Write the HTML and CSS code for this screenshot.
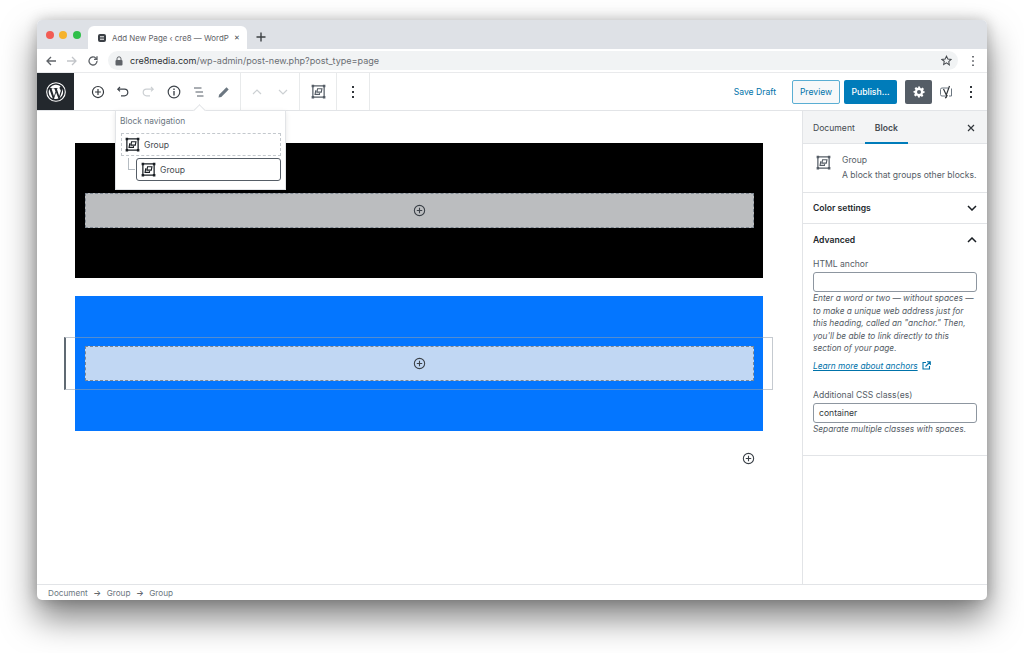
FILE: index.html
```html
<!DOCTYPE html>
<html lang="en">
<head>
    <meta charset="UTF-8">
    <title>Add New Page</title>
    <link rel="stylesheet" href="styles.css">
</head>
<body>
    <svg class="defs" width="0" height="0">
        <symbol id="group" viewBox="0 0 24 24">
            <path fill="none" stroke="currentColor" stroke-width="2" d="M3 3h18v18H3z"/>
            <path fill="currentColor" d="M1 1h4v4H1zM19 1h4v4h-4zM1 19h4v4H1zM19 19h4v4h-4z"/>
            <path fill="none" stroke="currentColor" stroke-width="1.800" d="M10.500 7.500h7l-1 5.500h-7zM8.500 11h-1l-1 5.500h7l.3-2"/>
        </symbol>
        <symbol id="plus-circle" viewBox="0 0 24 24">
            <circle cx="12" cy="12" r="9.500" fill="none" stroke="currentColor" stroke-width="2"/>
            <path fill="none" stroke="currentColor" stroke-width="2" d="M12 7v10M7 12h10"/>
        </symbol>
    </svg>

    <div class="window">
        <div class="tabstrip">
            <div class="lights">
                <span class="light red"></span>
                <span class="light yellow"></span>
                <span class="light green"></span>
            </div>
            <div class="tab">
                <svg class="favicon" width="10" height="10" viewBox="0 0 10 10"><rect x="1" y="1" width="8" height="8" rx="2" fill="#3a3f45"/><path d="M3 3.800h4M3 6.200h4" stroke="#fff" stroke-width="1"/></svg>
                <span class="tab-title">Add New Page ‹ cre8 — WordP</span>
                <span class="tab-close">✕</span>
            </div>
            <svg class="new-tab" width="10" height="10" viewBox="0 0 10 10"><path d="M5 .5v9M.5 5h9" stroke="#3c4043" stroke-width="1.400"/></svg>
        </div>

        <div class="addressbar">
            <svg width="12" height="12" viewBox="0 0 12 12"><path d="M11 6H2M6 2 2 6l4 4" fill="none" stroke="#5f6368" stroke-width="1.300"/></svg>
            <svg width="12" height="12" viewBox="0 0 12 12"><path d="M1 6h9M6 2l4 4-4 4" fill="none" stroke="#c2c5c9" stroke-width="1.300"/></svg>
            <svg width="12" height="12" viewBox="0 0 12 12"><path d="M10 6a4 4 0 1 1-1.200-2.900L10 4.300V1.300M10 4.300H7" fill="none" stroke="#5f6368" stroke-width="1.300"/></svg>
            <div class="omnibox">
                <svg width="8" height="10" viewBox="0 0 8 10"><rect x=".5" y="4" width="7" height="5.500" rx="1" fill="#5f6368"/><path d="M2 4V2.800a2 2 0 0 1 4 0V4" fill="none" stroke="#5f6368"/></svg>
                <span class="url"><span class="url-host">cre8media.com</span>/wp-admin/post-new.php?post_type=page</span>
                <svg class="star" width="11" height="11" viewBox="0 0 24 24"><path d="m12 2.500 3 6.400 7 .9-5.100 4.800 1.300 7L12 17.200l-6.200 3.400 1.300-7L2 9.800l7-.9z" fill="none" stroke="#45494e" stroke-width="2.200"/></svg>
            </div>
            <svg class="chrome-menu" width="4" height="12" viewBox="0 0 4 12"><path d="M2 1v1.500M2 5.200v1.500M2 9.500V11" stroke="#5f6368" stroke-width="1.800"/></svg>
        </div>

        <div class="toolbar">
            <div class="wp-logo">
                <svg width="20" height="20" viewBox="0 0 20 20"><circle cx="10" cy="10" r="9.300" fill="none" stroke="#fff" stroke-width="1.100"/><path fill="#fff" d="M2.700 10a7.300 7.300 0 0 0 4.100 6.600L3.300 7A7.300 7.300 0 0 0 2.700 10zm12.200-.4c0-.9-.3-1.500-.6-2-.4-.6-.7-1.100-.7-1.700 0-.7.5-1.300 1.200-1.300h.1A7.300 7.300 0 0 0 3.900 6h.5c.8 0 1.900-.1 1.900-.1.400 0 .4.600 0 .6 0 0-.4.100-.8.100l2.500 7.600 1.500-4.600-1.100-3c-.4 0-.7-.1-.7-.1-.4 0-.3-.6 0-.6 0 0 1.200.1 1.900.1.800 0 1.900-.1 1.900-.1.400 0 .4.600 0 .6 0 0-.4.100-.8.100l2.500 7.500.7-2.300c.3-1 .5-1.600.5-2.200zM10.100 10.600 8 16.700a7.300 7.300 0 0 0 4.500-.1l-.1-.1zm6.100-4c0 .2.100.5.100.8 0 .7-.1 1.500-.5 2.600l-2.200 6.300a7.300 7.300 0 0 0 2.600-9.700z"/></svg>
            </div>
            <div class="tool-group main-tools">
                <svg class="tool" width="14" height="14"><use href="#plus-circle"/></svg>
                <svg class="tool" width="14" height="14" viewBox="0 0 14 14"><path d="M4 2 1.800 4.200 4 6.400M1.800 4.200h6.700a3.300 3.300 0 0 1 0 6.600H5" fill="none" stroke="#40464d" stroke-width="1.200"/></svg>
                <svg class="tool" width="14" height="14" viewBox="0 0 14 14"><path d="M10 2l2.200 2.200L10 6.400M12.200 4.200H5.500a3.300 3.300 0 0 0 0 6.600H9" fill="none" stroke="#ccd0d3" stroke-width="1.200"/></svg>
                <svg class="tool" width="14" height="14" viewBox="0 0 14 14"><circle cx="7" cy="7" r="5.800" fill="none" stroke="#40464d" stroke-width="1.200"/><path d="M7 6v4.500M7 3.500V5" stroke="#40464d" stroke-width="1.400"/></svg>
                <svg class="tool" width="14" height="14" viewBox="0 0 14 14"><path d="M2 3h7.500M3.500 7H11M5 11h6.500" stroke="#555d66" stroke-width="1"/></svg>
                <svg class="tool" width="14" height="14" viewBox="0 0 14 14"><path d="M1.500 12.500l.6-2.800L9.500 2.300l2.200 2.200-7.400 7.400z" fill="#6c7781"/></svg>
            </div>
            <div class="tool-group mover">
                <svg width="10" height="6" viewBox="0 0 10 6"><path d="M1 5l4-4 4 4" fill="none" stroke="#ccd0d3" stroke-width="1.200"/></svg>
                <svg width="10" height="6" viewBox="0 0 10 6"><path d="M1 1l4 4 4-4" fill="none" stroke="#ccd0d3" stroke-width="1.200"/></svg>
            </div>
            <div class="tool-group switcher">
                <svg class="group-icon" width="15" height="15"><use href="#group"/></svg>
            </div>
            <div class="tool-group more">
                <svg width="4" height="14" viewBox="0 0 4 14"><path d="M2 1v2M2 6v2M2 11v2" stroke="#32373c" stroke-width="2"/></svg>
            </div>
            <div class="publish-tools">
                <span class="save-draft">Save Draft</span>
                <span class="btn btn-preview">Preview</span>
                <span class="btn btn-publish">Publish…</span>
                <span class="btn-settings">
                    <svg width="12" height="12" viewBox="0 0 24 24"><path fill="#fff" fill-rule="evenodd" d="M10 1h4l.6 3.200 1.900.8 2.700-1.800 2.800 2.800-1.800 2.700.8 1.900L23 10v4l-3.200.6-.8 1.900 1.800 2.700-2.800 2.800-2.700-1.800-1.900.8L14 23h-4l-.6-3.200-1.900-.8-2.700 1.800L2 18l1.800-2.700-.8-1.900L1 13V10l3.200-.6.8-1.900L3.200 4.800 6 2l2.700 1.800 1.900-.8zM12 8a4 4 0 1 0 0 8 4 4 0 0 0 0-8z"/></svg>
                </span>
                <svg class="yoast" width="14" height="14" viewBox="0 0 14 14"><path d="M9 3H3a1.500 1.500 0 0 0-1.500 1.500v5A1.500 1.500 0 0 0 3 11h5" fill="none" stroke="#6c7781"/><path d="M12.500 3.500V11H10" fill="none" stroke="#6c7781"/><path d="M4.500 4 7.300 10 10.500 1M6 13c1.200-.3 1.800-1.300 2.300-3" fill="none" stroke="#32373c" stroke-width="1.200"/></svg>
                <svg width="4" height="14" viewBox="0 0 4 14"><path d="M2 1v2M2 6v2M2 11v2" stroke="#32373c" stroke-width="2"/></svg>
            </div>
        </div>

        <div class="editor">
            <main class="canvas">
                <section class="block block-black">
                    <div class="inner-block">
                        <svg class="inner-add" width="13" height="13"><use href="#plus-circle"/></svg>
                    </div>
                </section>
                <section class="block block-blue">
                    <div class="inner-block">
                        <svg class="inner-add" width="13" height="13"><use href="#plus-circle"/></svg>
                    </div>
                </section>
                <div class="selected-outline"></div>
                <svg class="canvas-add" width="13" height="13"><use href="#plus-circle"/></svg>
            </main>

            <aside class="sidebar">
                <div class="side-tabs">
                    <span class="side-tab">Document</span>
                    <span class="side-tab active">Block</span>
                    <svg class="side-close" width="8" height="8" viewBox="0 0 8 8"><path d="M1 1l6 6M7 1 1 7" stroke="#32373c" stroke-width="1.200"/></svg>
                </div>
                <div class="block-card">
                    <svg class="card-icon" width="15" height="15"><use href="#group"/></svg>
                    <div>
                        <div class="card-title">Group</div>
                        <div class="card-desc">A block that groups other blocks.</div>
                    </div>
                </div>
                <div class="panel-row">
                    <span>Color settings</span>
                    <svg width="10" height="6" viewBox="0 0 10 6"><path d="M1 1l4 4 4-4" fill="none" stroke="#191e23" stroke-width="1.500"/></svg>
                </div>
                <div class="panel-advanced">
                    <div class="panel-row bare">
                        <span>Advanced</span>
                        <svg width="10" height="6" viewBox="0 0 10 6"><path d="M1 5l4-4 4 4" fill="none" stroke="#191e23" stroke-width="1.500"/></svg>
                    </div>
                    <label class="field-label">HTML anchor</label>
                    <div class="field"></div>
                    <p class="help">Enter a word or two — without spaces — to make a unique web address just for this heading, called an "anchor." Then, you'll be able to link directly to this section of your page.</p>
                    <p class="learn"><a>Learn more about anchors</a>
                        <svg width="9" height="9" viewBox="0 0 9 9"><path d="M4 1.500H1v6.500h6.500V5" fill="none" stroke="#0073aa" stroke-width="1.100"/><path d="M3.500 5.500 8 1M5 .7h3.300V4" fill="none" stroke="#0073aa" stroke-width="1.100"/></svg>
                    </p>
                    <label class="field-label">Additional CSS class(es)</label>
                    <div class="field">container</div>
                    <p class="help">Separate multiple classes with spaces.</p>
                </div>
            </aside>

            <div class="block-nav">
                <div class="nav-title">Block navigation</div>
                <div class="nav-item nav-parent">
                    <svg width="15" height="15"><use href="#group"/></svg>
                    <span>Group</span>
                </div>
                <div class="nav-child">
                    <span class="nav-branch"></span>
                    <div class="nav-item nav-current">
                        <svg width="15" height="15"><use href="#group"/></svg>
                        <span>Group</span>
                    </div>
                </div>
            </div>
        </div>

        <footer class="breadcrumb">
            <span>Document</span><span class="crumb-arrow">→</span><span>Group</span><span class="crumb-arrow">→</span><span>Group</span>
        </footer>
    </div>
</body>
</html>
```

FILE: styles.css
```css
html, body {
    margin: 0;
    height: 653px;
    overflow: hidden;
    background: #fff;
}

body {
    font-family: Inter, "Noto Sans", sans-serif;
    font-size: 8.6px;
    color: #32373c;
}

.defs {
    position: absolute;
}

svg {
    display: block;
    flex: none;
}

.window {
    width: 950px;
    height: 580px;
    margin: 20px 0 0 37px;
    display: flex;
    flex-direction: column;
    background: #fff;
    border-radius: 5px;
    overflow: hidden;
    box-shadow: 0 18px 34px rgba(0,0,0,0.5), 0 0 14px rgba(0,0,0,0.2);
}

/* browser chrome */
.tabstrip {
    height: 29px;
    flex: none;
    background: #dee1e6;
    display: flex;
    align-items: flex-end;
}

.lights {
    display: flex;
    gap: 5.3px;
    align-self: flex-start;
    padding: 11px 0 0 9px;
    width: 43px;
    box-sizing: border-box;
    margin-right: 8px;
}

.light {
    width: 8px;
    height: 8px;
    border-radius: 50%;
    flex: none;
}

.red { background: #f25c54; }
.yellow { background: #f6b32c; }
.green { background: #2fbf4a; }

.tab {
    width: 159px;
    height: 23px;
    background: #fff;
    border-radius: 6px 6px 0 0;
    display: flex;
    align-items: center;
    padding: 0 7px 0 9px;
    box-sizing: border-box;
}

.tab-title {
    margin-left: 5px;
    width: 120px;
    white-space: nowrap;
    font-size: 7.9px;
    color: #5f6368;
}

.tab-close {
    font-size: 7px;
    margin-left: auto;
    color: #45494e;
}

.new-tab {
    margin: 0 0 7px 9px;
}

.addressbar {
    height: 24px;
    flex: none;
    box-sizing: border-box;
    background: #fff;
    display: flex;
    align-items: center;
    padding: 0 12px 0 8px;
    gap: 9px;
    border-bottom: 1px solid #e9eaec;
}

.omnibox {
    flex: 1;
    height: 19px;
    background: #f1f3f4;
    border-radius: 10px;
    display: flex;
    align-items: center;
    padding: 0 6px 0 7px;
    gap: 7px;
    margin-right: 4px;
}

.url {
    flex: 1;
    font-size: 9.05px;
    color: #6a6e73;
}

.url-host {
    color: #2b2e31;
}

/* wp toolbar */
.toolbar {
    height: 38px;
    flex: none;
    box-sizing: border-box;
    border-bottom: 1px solid #e2e4e7;
    display: flex;
    align-items: center;
}

.wp-logo {
    width: 37px;
    height: 37px;
    background: #23282d;
    display: flex;
    align-items: center;
    justify-content: center;
}

.tool-group {
    height: 37px;
    display: flex;
    align-items: center;
    box-sizing: border-box;
    border-right: 1px solid #e8eaeb;
}

.main-tools {
    width: 167px;
    padding-left: 17px;
    gap: 11.2px;
}

.mover {
    width: 59px;
    padding-left: 11px;
    gap: 16px;
}

.switcher {
    width: 37px;
    justify-content: center;
    color: #555d66;
}

.more {
    width: 33px;
    justify-content: center;
}

.publish-tools {
    margin-left: auto;
    display: flex;
    align-items: center;
    padding-right: 14px;
}

.save-draft {
    color: #0073aa;
    margin-right: 16px;
}

.btn {
    height: 24px;
    box-sizing: border-box;
    border-radius: 2px;
    display: flex;
    align-items: center;
    justify-content: center;
}

.btn-preview {
    width: 48px;
    border: 1px solid #5aaed3;
    color: #0073aa;
    background: #f7f8f9;
    margin-right: 4px;
}

.btn-publish {
    width: 53px;
    background: #007cba;
    color: #fff;
    font-weight: 500;
    margin-right: 8px;
}

.btn-settings {
    width: 27px;
    height: 24px;
    border-radius: 2px;
    background: #555d66;
    display: flex;
    align-items: center;
    justify-content: center;
    margin-right: 7px;
}

.yoast {
    margin-right: 16px;
}

/* editor */
.editor {
    flex: 1;
    min-height: 0;
    display: flex;
    position: relative;
}

.canvas {
    width: 765px;
    flex: none;
    box-sizing: border-box;
    padding: 32px 39px 0 38px;
    display: flex;
    flex-direction: column;
    gap: 18px;
    position: relative;
}

.block {
    padding: 50px 9px 50px 10px;
}

.block-black { background: #000; }
.block-blue { background: #0476ff; }

.inner-block {
    height: 35px;
    box-sizing: border-box;
    border: 1px dashed #7f8892;
    display: flex;
    align-items: center;
    justify-content: center;
    color: #3b4148;
}

.block-black .inner-block { background: #bbbdbf; }
.block-blue .inner-block { background: #c1d7f3; }

.selected-outline {
    position: absolute;
    left: 27px;
    top: 226px;
    width: 709px;
    height: 53px;
    box-sizing: border-box;
    border: 1px solid rgba(150,160,170,0.55);
    border-left: 2px solid #606a73;
}

.canvas-add {
    position: absolute;
    left: 705px;
    top: 341px;
    color: #3b4148;
}

/* sidebar */
.sidebar {
    flex: 1;
    border-left: 1px solid #e2e4e7;
    box-sizing: border-box;
}

.side-tabs {
    height: 33px;
    box-sizing: border-box;
    background: #f3f4f5;
    border-bottom: 1px solid #e2e4e7;
    display: flex;
    align-items: stretch;
    position: relative;
    padding-left: 9px;
    gap: 9px;
}

.side-tab {
    display: flex;
    align-items: center;
    justify-content: center;
    padding: 1px 1px 0;
    color: #454a50;
}

.side-tab.active {
    width: 43px;
    font-weight: 600;
    box-sizing: border-box;
    border-bottom: 2px solid #007cba;
    height: 33px;
    padding-top: 3px;
}

.side-close {
    position: absolute;
    right: 12px;
    top: 13px;
}

.block-card {
    height: 49px;
    box-sizing: border-box;
    border-bottom: 1px solid #e2e4e7;
    display: flex;
    padding: 11px 0 0 13px;
    gap: 11px;
    color: #555d66;
}

.card-title {
    margin-bottom: 4px;
    line-height: 11px;
}

.card-desc {
    line-height: 11px;
    white-space: nowrap;
}

.panel-row {
    height: 31px;
    box-sizing: border-box;
    border-bottom: 1px solid #e2e4e7;
    display: flex;
    align-items: center;
    justify-content: space-between;
    padding: 0 10px;
    font-weight: 600;
    color: #23282d;
}

.panel-row.bare {
    border-bottom: none;
    padding: 0;
}

.panel-advanced {
    height: 232px;
    box-sizing: border-box;
    padding: 0 10px;
    border-bottom: 1px solid #e2e4e7;
}

.field-label {
    display: block;
    color: #555d66;
    line-height: 11px;
    margin-top: 4px;
    margin-bottom: 2px;
}

.field {
    height: 20px;
    box-sizing: border-box;
    border: 1px solid #8d96a0;
    border-radius: 3px;
    padding-left: 5px;
    display: flex;
    align-items: center;
    color: #32373c;
}

.help {
    margin: 0;
    font-style: italic;
    font-size: 8.3px;
    line-height: 12.6px;
    color: #555d66;
}

.learn {
    margin: 5px 0 18px;
    display: flex;
    align-items: center;
    gap: 4px;
    font-size: 8.3px;
    font-style: italic;
    line-height: 12px;
}

.learn a {
    color: #0073aa;
    text-decoration: underline;
}

/* block navigation popover */
.block-nav {
    position: absolute;
    left: 78px;
    top: -1px;
    width: 171px;
    height: 80px;
    box-sizing: border-box;
    background: #fff;
    border: 1px solid #e2e4e7;
    padding: 0 4px 0 5px;
    box-shadow: 0 2px 5px rgba(0,0,0,0.1);
}

.block-nav::before {
    content: '';
    position: absolute;
    left: 79px;
    top: -5px;
    width: 8px;
    height: 8px;
    background: #fff;
    border-left: 1px solid #e2e4e7;
    border-top: 1px solid #e2e4e7;
    transform: rotate(45deg);
}

.nav-title {
    color: #6c7781;
    font-size: 8.4px;
    line-height: 11px;
    padding: 5px 0 0;
    margin: 0 0 6px -1px;
}

.nav-item {
    height: 23px;
    box-sizing: border-box;
    display: flex;
    align-items: center;
    gap: 4px;
    padding-left: 3px;
    color: #454a50;
}

.nav-parent {
    border: 1px dashed #c3c8cd;
    margin-bottom: 2px;
}

.nav-child {
    display: flex;
    padding-left: 7px;
}

.nav-branch {
    width: 6px;
    height: 11px;
    flex: none;
    border-left: 1px solid #b5bcc2;
    border-bottom: 1px solid #b5bcc2;
    margin-right: 1px;
}

.nav-current {
    flex: 1;
    border: 1px solid #555d66;
    border-radius: 3px;
    padding-left: 4px;
}

.nav-item svg {
    color: #191e23;
}

/* footer */
.breadcrumb {
    height: 16px;
    flex: none;
    box-sizing: border-box;
    border-top: 1px solid #e2e4e7;
    display: flex;
    align-items: center;
    padding-left: 11px;
    font-size: 8.2px;
    color: #6c7781;
}

.crumb-arrow {
    margin: 0 5.5px;
    color: #40464d;
}
```
